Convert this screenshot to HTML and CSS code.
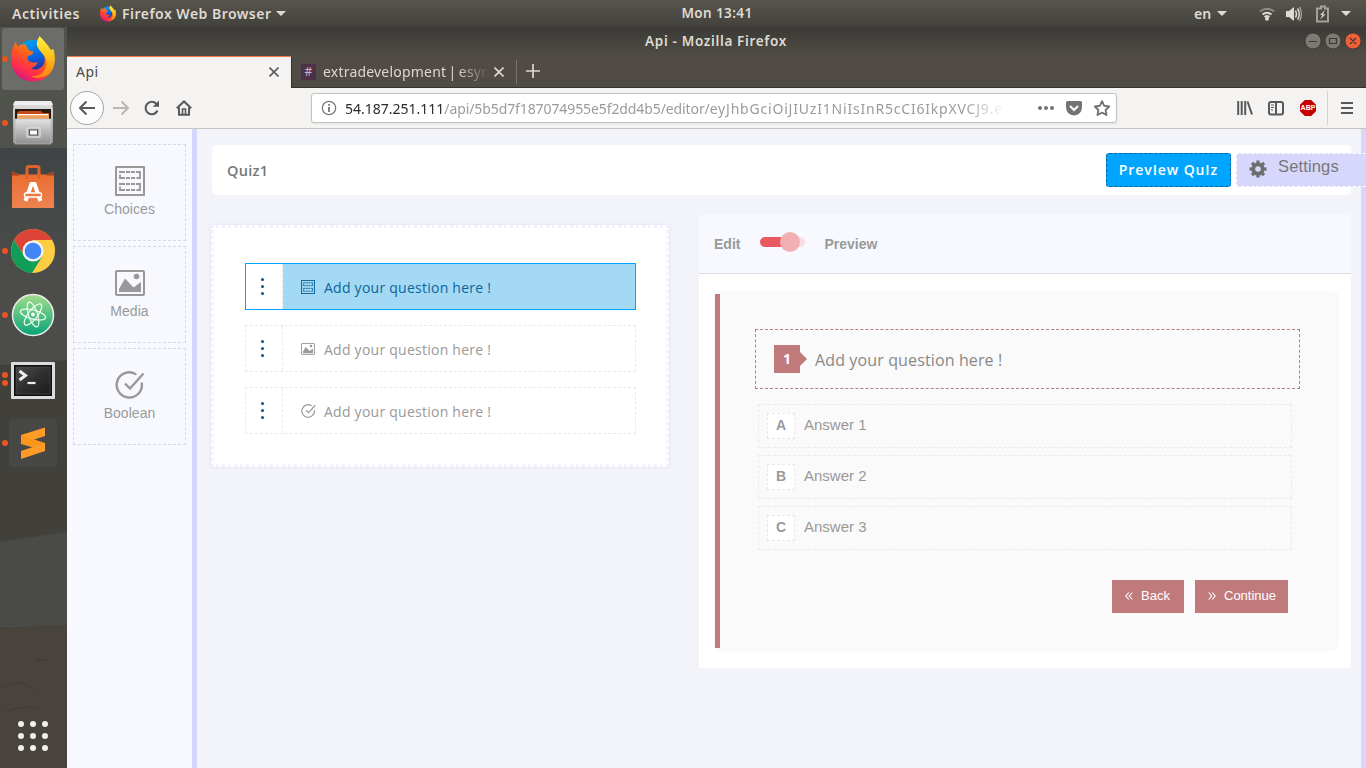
FILE: index.html
```
<!DOCTYPE html>
<html lang="en">
<head>
<meta charset="utf-8">
<title>Api</title>
<link rel="stylesheet" href="styles.css">
</head>
<body>
<svg class="defs" aria-hidden="true">
  <defs>
    <linearGradient id="fxRed" x1="0.8" y1="0" x2="0.2" y2="1"><stop offset="0" stop-color="#ffb000"/><stop offset=".45" stop-color="#ff5b1f"/><stop offset=".75" stop-color="#ff2a50"/><stop offset="1" stop-color="#c8148c"/></linearGradient>
    <linearGradient id="fxBlue" x1="0.3" y1="0" x2="0.6" y2="1"><stop offset="0" stop-color="#00a5f5"/><stop offset=".5" stop-color="#0a63e0"/><stop offset="1" stop-color="#321a8c"/></linearGradient>
    <linearGradient id="fxYel" x1="0.4" y1="0" x2="0.5" y2="1"><stop offset="0" stop-color="#fff04a"/><stop offset=".5" stop-color="#ffc416"/><stop offset="1" stop-color="#ff8214"/></linearGradient>
    <linearGradient id="cab" x1="0" y1="0" x2="0" y2="1"><stop offset="0" stop-color="#e2e2e2"/><stop offset="1" stop-color="#8f8f8f"/></linearGradient>
    <linearGradient id="bag" x1="0" y1="0" x2="0" y2="1"><stop offset="0" stop-color="#ea6c2c"/><stop offset="1" stop-color="#ee8352"/></linearGradient>
    <linearGradient id="atom" x1="0" y1="0" x2="0" y2="1"><stop offset="0" stop-color="#a2dc8c"/><stop offset="1" stop-color="#06a478"/></linearGradient>
    <linearGradient id="term" x1="0" y1="0" x2="1" y2="1"><stop offset="0" stop-color="#4a4a4a"/><stop offset=".5" stop-color="#303030"/><stop offset="1" stop-color="#1c1c1c"/></linearGradient>
    <linearGradient id="sky" x1="0" y1="0" x2="0" y2="1"><stop offset="0" stop-color="#3f4446"/><stop offset="1" stop-color="#4c4d4a"/></linearGradient>
    <symbol id="firefox" viewBox="0 0 44 46">
      <circle cx="22" cy="22" r="18" fill="url(#fxBlue)"/>
      <path d="M5 5.500C5.500 9 6 10 7.500 10.500C9 9 11 8 15 8.500C15.500 11 17 14 19.500 15L22 15.500C22.300 18 21 19 17 20C15.500 24 18 26 22 26.500C24 27.500 25 25.500 26.500 27C25 30 23 31 20 32.500C25 35 30 33 33 28C35 22 33 17 29 13C32 6 37 9 42 19C44 27 43 31 40.500 35C36 42 30 45.500 22 45.500C9 45.500 0 36 0 23C0 16 2 10 5 5.500Z" fill="url(#fxRed)"/>
      <path d="M28.500 0C32.500 4 37 9 40 14L42.500 13C45 22 44.500 31 38.500 38C33 42 25 43 20 40C30 41 36 35 35.500 25C34.500 18 24 13 26 6C26.500 3 28 1.500 28.500 0Z" fill="url(#fxYel)"/>
    </symbol>
    <symbol id="choices" viewBox="0 0 30 30" fill="none" stroke="currentColor">
      <rect x="1" y="1" width="28" height="28" stroke-width="2"/>
      <path d="M4 6H10M11 6h4M16 6h4M21 6H25V12H21.500M5 8.500V12H10M11 12h4M16 12h4M4 18H10M11 18h4M16 18h4M21 18H25V24H21.500M5 20.500V24H10M11 24h4M16 24h4" stroke-width="1.800"/>
    </symbol>
    <symbol id="media" viewBox="0 0 30 26">
      <rect x="1" y="1" width="28" height="24" rx="1" fill="none" stroke="currentColor" stroke-width="2"/>
      <circle cx="21.500" cy="6.500" r="2.800" fill="currentColor"/>
      <path d="M4 22V19L10 8.500L18.500 17.500L26 12V22Z" fill="currentColor"/>
    </symbol>
    <symbol id="boolean" viewBox="0 0 30 28" fill="none" stroke="currentColor" stroke-width="2.400">
      <path d="M20.500 3A12.600 12.600 0 1 0 26.800 12.500" stroke-linecap="round"/>
      <path d="M10 12.500l5 5L28.500 2.500"/>
    </symbol>
  </defs>
</svg>
<div class="screen">
  <header class="topbar">
    <span class="activities">Activities</span>
    <svg class="fx-small"><use href="#firefox"/></svg>
    <span class="appname">Firefox Web Browser</span>
    <i class="caret"></i>
    <span class="clock">Mon 13:41</span>
    <span class="lang">en</span>
    <i class="caret caret-lang"></i>
    <svg class="tray" width="84" height="18" viewBox="0 0 84 18">
      <g fill="none" stroke="#dedbd5" stroke-width="1.800"><path d="M1 6.500Q8 1 15 6.500" stroke="#8f8c86"/><path d="M3.500 9.500Q8 6 12.500 9.500"/><path d="M5.500 12Q8 10 10.500 12"/></g>
      <circle cx="8" cy="13.700" r="2" fill="#dedbd5"/>
      <path d="M27 6h3l5-4v14l-5-4h-3z" fill="#dedbd5"/>
      <path d="M36.500 5.500q2 3.500 0 7M38.500 3.500q3.500 5.500 0 11" fill="none" stroke="#dedbd5" stroke-width="1.500"/><path d="M40.500 2q4 7 0 14" fill="none" stroke="#aaa7a1" stroke-width="1.300"/>
      <path d="M60 3.500h2V1.500h4v2h3V16.500H58V3.500z" fill="none" stroke="#a4a19b" stroke-width="2"/>
      <path d="M66 5l-5 5h2.500L61 14.500l5.500-5H64z" fill="#dedbd5"/>
    </svg>
    <i class="caret caret-end"></i>
  </header>
  <div class="desktop">
    <nav class="dock">
      <svg class="sand" width="67" height="741" viewBox="0 27 67 741" preserveAspectRatio="none">
        <rect y="27" width="67" height="741" fill="#4c4d4a"/>
        <rect y="27" width="67" height="121" fill="#50524c"/>
        <path d="M0 148h67v130H0z" fill="url(#sky)"/>
        <path d="M0 365L67 360V532L0 542Z" fill="#42403b"/>
        <path d="M0 542L67 532V625H0Z" fill="#4a4a46"/>
        <path d="M0 627Q25 628 40 625H67V768H0Z" fill="#48433c"/>
        <path d="M2 688Q22 676 34 690M5 712q20-8 33-3M36 660h12" stroke="#3f3b35" fill="none"/>
      </svg>
      <div class="app app-active"><i class="run"></i><svg width="44" height="46"><use href="#firefox"/></svg></div>
      <div class="app"><i class="run"></i>
        <svg width="44" height="46" viewBox="0 0 44 46"><path d="M3 2h38l1 8v33H2V10z" fill="url(#cab)"/><path d="M2 5L4 1h36l2 4z" fill="#eee"/><path d="M4 9h36v11H4z" fill="#26190f"/><path d="M8 11h22l2 2h6v7H6v-7z" fill="#c44b17"/><path d="M6 14h32v5H6z" fill="#f0a25c"/><path d="M7 14h30v1.200H7z" fill="#fff"/><path d="M4 19h36v25H4z" fill="url(#cab)" stroke="#bbb" stroke-width=".7"/><rect x="16" y="28" width="13" height="9" rx="1" fill="#a8a8a8" stroke="#d9d9d9" stroke-width="1.500"/><rect x="18.500" y="30" width="8" height="5" fill="#fff" stroke="#555"/></svg></div>
      <div class="app">
        <svg width="44" height="46" viewBox="0 0 44 46"><path d="M16 15V4Q16 2.500 18 2.500H26Q28 2.500 28 4V15" fill="none" stroke="#e0622c" stroke-width="3"/><path d="M1 7.500l7 3h28l7-3v36.500H1z" fill="url(#bag)"/><path d="M1 7.500l8 4H1zM43 7.500l-8 4h8z" fill="#a9431d"/><path d="M16 15V9M28 15V9" stroke="#e0622c" stroke-width="3"/><path d="M14.500 37l6-17h3l6 17" fill="none" stroke="#fff" stroke-width="4"/><rect x="13.500" y="29" width="17" height="4" rx="1.500" fill="#ec7840" stroke="#fff" stroke-width="1.500"/></svg></div>
      <div class="app"><i class="run"></i>
        <svg width="44" height="46" viewBox="0 0 44 46"><circle cx="22" cy="23" r="22" fill="#ffcd41"/><path d="M3 12A22 22 0 0 1 41 12H22L14 29z" fill="#db4437"/><path d="M3 12A22 22 0 0 0 21 45L31 29L13.500 28Z" fill="#0f9d58"/><path d="M22 12H41Q44 17 44 23L31 28z" fill="#ffcd41"/><circle cx="22" cy="23" r="10.500" fill="#f4f4f4"/><circle cx="22" cy="23" r="8.300" fill="#4285f4"/></svg></div>
      <div class="app"><i class="run"></i>
        <svg width="44" height="46" viewBox="0 0 44 46"><circle cx="22" cy="23" r="20.500" fill="url(#atom)" stroke="#ededed" stroke-width="1.500"/><g fill="none" stroke="#f2fff0" stroke-width="1.200"><ellipse cx="22" cy="22.500" rx="13" ry="4.500" transform="rotate(15 22 22.500)"/><ellipse cx="22" cy="22.500" rx="13" ry="4.500" transform="rotate(72 22 22.500)"/><ellipse cx="22" cy="22.500" rx="13" ry="4.500" transform="rotate(-52 22 22.500)"/></g><circle cx="22" cy="22.500" r="1.900" fill="#fff"/></svg></div>
      <div class="app"><i class="run run-up"></i><i class="run run-down"></i>
        <svg width="46" height="46" viewBox="0 0 46 46"><rect x="1" y="6" width="44" height="37" rx="1" fill="#dcdcdc"/><rect x="4" y="9" width="38" height="31" fill="#111"/><rect x="6" y="11" width="34" height="27" fill="url(#term)" stroke="#555" stroke-width=".6"/><path d="M9.500 15l6 4.500-6 4.500" fill="none" stroke="#eee" stroke-width="3"/><path d="M17.500 27h8" stroke="#eee" stroke-width="2.200"/></svg></div>
      <div class="app"><i class="run"></i>
        <svg width="48" height="48" viewBox="0 0 48 48"><rect width="48" height="48" rx="3" fill="#474746"/><path d="M12 16L36 8.500V17L12 25z" fill="#ff9b27"/><path d="M12 16L36 24V32L12 25z" fill="#fb961c"/><path d="M12 32L36 24V32L12 40z" fill="#ff9b27"/></svg></div>
      <svg class="grid-icon" width="32" height="32" viewBox="0 0 32 32" fill="#f0f0ee"><circle cx="4" cy="4" r="3"/><circle cx="16" cy="4" r="3"/><circle cx="28" cy="4" r="3"/><circle cx="4" cy="16" r="3"/><circle cx="16" cy="16" r="3"/><circle cx="28" cy="16" r="3"/><circle cx="4" cy="28" r="3"/><circle cx="16" cy="28" r="3"/><circle cx="28" cy="28" r="3"/></svg>
    </nav>
    <section class="window">
      <div class="titlebar">
        <span class="wintitle">Api - Mozilla Firefox</span>
        <svg class="winbtns" width="58" height="18" viewBox="0 0 58 18"><g stroke="#35332f" stroke-width=".8"><circle cx="9" cy="9" r="8" fill="#7c7a74"/><circle cx="29" cy="9" r="8" fill="#7c7a74"/><circle cx="49" cy="9" r="8" fill="#ee6038"/></g><path d="M5 9.500h8M25.500 6.500h7v5h-7zM46 6l6 6m0-6l-6 6" fill="none" stroke="#3a3833" stroke-width="1.200"/></svg>
      </div>
      <div class="tabs">
        <div class="tab tab-on"><span class="tabtext">Api</span><svg class="x" viewBox="0 0 10 10"><path d="M.5.500l9 9m0-9l-9 9"/></svg></div>
        <div class="tab tab-off"><span class="slack">#</span><span class="tabtext tabfade">extradevelopment | esyn</span><svg class="x" viewBox="0 0 10 10"><path d="M.5.500l9 9m0-9l-9 9"/></svg></div>
        <svg class="plus" viewBox="0 0 14 14"><path d="M7 0v14M0 7h14"/></svg>
      </div>
      <div class="toolbar">
        <span class="back"><svg width="18" height="16" viewBox="0 0 18 16"><path d="M17 8H2M8.500 1.500L2 8l6.500 6.500"/></svg></span>
        <svg class="tool fwd" width="18" height="16" viewBox="0 0 18 16"><path d="M1 8h15M9.500 1.500L16 8l-6.500 6.500"/></svg>
        <svg class="tool reload" width="16" height="16" viewBox="0 0 16 16"><path d="M13.500 10.500A6.200 6.200 0 1 1 12.500 4"/><path d="M15 .5V6.800H8.800z" fill="#595959" stroke="none"/></svg>
        <svg class="tool home" width="16" height="16" viewBox="0 0 16 16"><path d="M.8 8.300L8 1.500l7.200 6.800M3 7.500V14.800h10V7.500"/><path d="M6.500 14.500V9h3v5.500" stroke-width="1.600"/></svg>
        <div class="urlbar">
          <svg width="16" height="16" viewBox="0 0 16 16"><circle cx="8" cy="8" r="6.700" fill="none" stroke="#777" stroke-width="1.200"/><path d="M8 7v5M8 4v1.700" stroke="#777" stroke-width="1.800"/></svg>
          <span class="url"><b>54.187.251.111</b><span class="path">/api/5b5d7f187074955e5f2dd4b5/editor/</span><span class="token">eyJhbGciOiJIUzI1NiIsInR5cCI6IkpXVCJ9.e</span></span>
          <svg class="urlicons" width="78" height="18" viewBox="0 0 78 18"><g fill="#737373"><circle cx="4" cy="9" r="2"/><circle cx="10" cy="9" r="2"/><circle cx="16" cy="9" r="2"/><path d="M31.500 2H44.500Q46 2 46 3.500V8Q45.500 16 38 16.500Q30.500 16 30 8V3.500Q30 2 31.500 2z"/></g><path d="M34 7l4 4 4-4" fill="none" stroke="#fff" stroke-width="2"/><path d="M66 2.200l2.200 4.600 5 .7-3.600 3.500.9 5L66 13.600l-4.500 2.400.9-5-3.600-3.500 5-.7z" fill="none" stroke="#737373" stroke-width="1.900" stroke-linejoin="round"/></svg>
        </div>
        <svg class="tool lib" width="16" height="16" viewBox="0 0 16 16"><path d="M1.200 1v14M4.700 1v14M8.200 1v14M10.500 1.500l4.500 13"/></svg>
        <svg class="tool side" width="16" height="16" viewBox="0 0 16 16"><rect x="1" y="2" width="14" height="12.500" rx="2"/><path d="M8 2v12"/><path d="M3 5h3M3 7.500h3M3 10h2" stroke-width="1"/></svg>
        <span class="abp">ABP</span>
        <i class="sep"></i>
        <svg class="menu" width="12" height="12" viewBox="0 0 12 12"><path d="M0 1h12M0 6h12M0 11h12"/></svg>
      </div>
      <div class="page">
        <aside class="sidebar">
          <div class="kind"><svg width="30" height="30"><use href="#choices"/></svg><span>Choices</span></div>
          <div class="kind"><svg width="30" height="26" class="mid"><use href="#media"/></svg><span>Media</span></div>
          <div class="kind"><svg width="30" height="28" class="low"><use href="#boolean"/></svg><span>Boolean</span></div>
        </aside>
        <main class="main">
          <div class="quizbar">
            <h1>Quiz1</h1>
            <button class="preview">PrevIew QuIz</button>
            <div class="settings"><svg width="18" height="18" viewBox="0 0 18 18"><g fill="#6d6d6d"><path d="M7.400.500h3.200v17H7.400z"/><path d="M7.400.500h3.200v17H7.400z" transform="rotate(45 9 9)"/><path d="M7.400.500h3.200v17H7.400z" transform="rotate(90 9 9)"/><path d="M7.400.500h3.200v17H7.400z" transform="rotate(135 9 9)"/><circle cx="9" cy="9" r="6.600"/></g><circle cx="9" cy="9" r="2.800" fill="#d7d6fb"/></svg><span>Settings</span></div>
          </div>
          <div class="columns">
            <div class="questions">
              <div class="q q-on"><span class="grip"><i></i><i></i><i></i></span><span class="qbody"><svg width="14" height="14"><use href="#choices"/></svg><span>Add your question here !</span></span></div>
              <div class="q"><span class="grip"><i></i><i></i><i></i></span><span class="qbody"><svg width="14" height="12"><use href="#media"/></svg><span>Add your question here !</span></span></div>
              <div class="q"><span class="grip"><i></i><i></i><i></i></span><span class="qbody"><svg width="15" height="14" class="wide"><use href="#boolean"/></svg><span>Add your question here !</span></span></div>
            </div>
            <div class="editor">
              <div class="modes"><span>Edit</span><span class="switch"><i></i></span><span>Preview</span></div>
              <div class="quiz">
                <div class="ask"><span class="num">1</span><span>Add your question here !</span></div>
                <div class="ans"><b>A</b><span>Answer 1</span></div>
                <div class="ans"><b>B</b><span>Answer 2</span></div>
                <div class="ans"><b>C</b><span>Answer 3</span></div>
                <div class="btns">
                  <button class="btn btn-back"><svg width="8" height="8" viewBox="0 0 8 8"><path d="M3.800.500L.8 4l3 3.500M7.300.500L4.300 4l3 3.500"/></svg>Back</button>
                  <button class="btn btn-next"><svg width="8" height="8" viewBox="0 0 8 8"><path d="M.7.500l3 3.500-3 3.500M4.200.500l3 3.500-3 3.500"/></svg>Continue</button>
                </div>
              </div>
            </div>
          </div>
        </main>
      </div>
    </section>
  </div>
</div>
</body>
</html>
```
FILE: styles.css
```
* { box-sizing: border-box; }
body { margin: 0; overflow: hidden; font-family: "Liberation Sans", Arial, sans-serif; }
svg { display: block; flex: none; }
i { flex: none; }
.defs { position: absolute; width: 0; height: 0; }
.screen { width: 1366px; height: 768px; display: flex; flex-direction: column; overflow: hidden; }

/* desktop panel */
.topbar { position: relative; flex: none; height: 27px; display: flex; align-items: center; background: linear-gradient(#58554d, #42413c); color: #dfdbd2; font: 600 14px/27px "Noto Sans", sans-serif; white-space: nowrap; }
.activities { width: 88px; padding-left: 12px; letter-spacing: .55px; }
.fx-small { width: 16px; height: 17px; margin-left: 12px; }
.appname { width: 149px; margin-left: 6px; letter-spacing: .48px; }
.caret { width: 0; height: 0; border: 5px solid transparent; border-top-color: #dfdbd2; border-bottom: 0; margin-left: 5px; }
.clock { position: absolute; left: 617px; width: 200px; text-align: center; font-size: 13.500px; letter-spacing: .4px; }
.lang { margin-left: 908px; width: 18px; }
.tray { margin-left: 32px; }
.caret-end { margin-left: -2px; }

.desktop { flex: 1; display: flex; min-height: 0; }
.dock { position: relative; width: 67px; padding-right: 1px; display: flex; flex-direction: column; align-items: center; background: #4a4b48; }
.sand { position: absolute; left: 0; top: 0; }
.app { position: relative; width: 62px; height: 62px; margin-bottom: 2px; display: flex; align-items: center; justify-content: center; }
.app-active { background: #6c6d69; border-radius: 3px; margin-top: 1px; }
.run { position: absolute; left: 0; top: 28px; width: 6px; height: 6px; border-radius: 50%; background: #e95420; }
.run-up { top: 24px; }
.run-down { top: 32px; }
.grid-icon { position: relative; margin-top: auto; margin-bottom: 16px; }

/* browser chrome */
.window { flex: 1; min-width: 0; display: flex; flex-direction: column; background: #504c45; font-family: "Noto Sans", sans-serif; }
.titlebar { position: relative; height: 29px; flex: none; background: linear-gradient(#3b3a36, #504c45); }
.wintitle { display: block; width: 1298px; text-align: center; font: 600 13.500px/28px "Noto Sans", sans-serif; letter-spacing: .66px; color: #dfdbd2; }
.winbtns { position: absolute; left: 1237px; top: 5px; }
.tabs { height: 32px; flex: none; display: flex; align-items: flex-end; border-bottom: 1px solid #34332f; }
.tab { display: flex; align-items: center; height: 31px; font-size: 14px; }
.tab-on { width: 225px; height: 33px; margin-bottom: -1px; background: #f4f3f1; border-top: 2px solid #f07746; border-right: 1px solid #34332f; padding: 0 12px 2px 9px; justify-content: space-between; color: #4b4b4b; letter-spacing: .5px; }
.x { width: 10px; height: 10px; stroke: #5a5a5a; stroke-width: 1.600; fill: none; }
.tab-off { width: 225px; padding: 0 12px 0 9px; border-right: 1px solid #777269; height: 24px; margin-bottom: 3px; color: #dcd8cf; }
.tab-off .x { stroke: #dcd8cf; margin-left: 4px; }
.slack { width: 16px; height: 16px; background: #4b3048; color: #c9b3c5; font: 12px/16px "Noto Sans", sans-serif; text-align: center; margin-right: 6px; }
.tabfade { width: 168px; flex: none; overflow: hidden; white-space: nowrap; line-height: 23px; letter-spacing: .2px; word-spacing: -1.500px; padding: 0 0 1px 1px; -webkit-mask-image: linear-gradient(90deg, #000 80%, transparent); mask-image: linear-gradient(90deg, #000 80%, transparent); }
.plus { width: 14px; height: 14px; margin: 0 0 9px 9px; stroke: #dcd8cf; stroke-width: 1.700; }
.toolbar { height: 41px; flex: none; display: flex; align-items: center; background: #f4f3f1; border-bottom: 1px solid #c6c4c0; }
.back { width: 34px; height: 34px; margin-left: 3px; border: 1px solid #a5a4a2; border-radius: 50%; background: #fcfcfc; display: flex; align-items: center; justify-content: center; }
.back svg, .tool, .menu { fill: none; stroke: #595959; stroke-width: 2; }
.tool.fwd { margin-left: 8px; stroke: #b8b7b5; }
.reload { margin-left: 14px; }
.home { margin-left: 16px; }
.urlbar { width: 806px; height: 30px; margin-left: 119px; padding: 0 0 0 9px; border: 1px solid #c3c1be; border-radius: 3px; background: #fff; display: flex; align-items: center; box-shadow: 0 1px 2px #0001; }
.url { width: 660px; flex: none; margin: 0 31px 0 8px; padding-top: 1px; overflow: hidden; white-space: nowrap; font-size: 14px; color: #9b9b9b; -webkit-mask-image: linear-gradient(90deg, #000 94%, transparent); mask-image: linear-gradient(90deg, #000 94%, transparent); }
.url b { font-weight: 400; color: #2b2b2b; }
.path { letter-spacing: -.1px; }
.token { letter-spacing: .8px; }
.lib { margin-left: 120px; }
.side { margin-left: 15px; }
.abp { width: 16px; height: 16px; margin-left: 16px; background: #c60000; color: #fff; font: 700 7px/16px "Liberation Sans", sans-serif; text-align: center; clip-path: polygon(30% 0, 70% 0, 100% 30%, 100% 70%, 70% 100%, 30% 100%, 0 70%, 0 30%); }
.sep { width: 1px; height: 34px; margin-left: 11px; background: #d5d3d0; }
.menu { margin-left: 13px; }

/* quiz editor */
.page { flex: 1; min-height: 0; display: flex; background: #f3f4f9; font-family: "Liberation Sans", Arial, sans-serif; color: #999; }
.sidebar { width: 130px; flex: none; padding: 15px 6px; background: #f8f9ff; border-right: 5px solid #d5d6fb; display: flex; flex-direction: column; gap: 5px; }
.kind { width: 113px; height: 97px; border: 1px dashed #d9dade; display: flex; flex-direction: column; align-items: center; padding-top: 21px; font-size: 14px; line-height: 17px; }
.kind span { margin-top: 5px; letter-spacing: .05px; }
.kind .mid { margin: 2px 0; }
.kind .low { margin: 1px 0; }
.main { flex: 1; min-width: 0; padding: 16px 10px 0 15px; border-right: 5px solid #d7d7f9; }
.quizbar { height: 50px; display: flex; background: #fff; border-radius: 5px; padding: 8px 0 0 15px; }
.quizbar h1 { flex: 1; margin: 0; font: 600 14.500px/35px "Open Sans", sans-serif; color: #777; letter-spacing: .3px; }
.preview { width: 125px; height: 34px; padding: 0; border: 1px dashed #066398; border-radius: 3px; background: #00a5ff; color: #fff; font: 600 14px/30px "Open Sans", sans-serif; letter-spacing: .9px; }
.settings { position: relative; flex: none; width: 135px; height: 34px; margin: 0 -20px 0 5px; border: 1px dashed #fff; background: #d7d6fb; display: flex; padding: 6px 0 0 12px; color: #777; font-size: 16.500px; line-height: 16px; }
.settings svg { margin-right: 11px; }
.settings span { margin-top: -2px; letter-spacing: .15px; }
.columns { display: flex; align-items: flex-start; }
.questions { width: 458px; height: 242px; margin: 30px 30px 0 -1px; padding: 35px 30px 0 31px; border: 3px dotted #f3f1fd; background: #fff; box-shadow: 0 0 3px #dcdcfa; display: flex; flex-direction: column; gap: 15px; }
.q { width: 391px; height: 47px; display: flex; border: 1px dashed #e9e9e9; font: 14px/46px "Open Sans", sans-serif; letter-spacing: .25px; white-space: nowrap; }
.grip { width: 37px; border-right: 1px dashed #e9e9e9; display: flex; flex-direction: column; gap: 4px; align-items: center; padding: 14px 3px 0 0; background: #fff; }
.grip i { width: 3px; height: 3px; border-radius: 50%; background: #06577f; }
.qbody { flex: 1; display: flex; align-items: center; padding-left: 18px; }
.qbody svg { margin: 0 9px 0 0; }
.qbody .wide { margin-right: 8px; }
.qbody span { padding-top: 2px; line-height: 43px; }
.q-on { border: 1px solid #00a5ff; color: #0b659a; }
.q-on .qbody { background: #a4d9f6; }
.editor { width: 652px; height: 453px; margin-top: 20px; background: #fff; }
.modes { height: 59px; display: flex; align-items: center; padding-left: 15px; background: #f8f9ff; border-bottom: 1px solid #dadbe2; font-size: 14px; font-weight: 700; }
.switch { position: relative; width: 45px; height: 10px; margin: -4px 19px 0 20px; border-radius: 5px; background: linear-gradient(90deg, #e85a61 65%, #fadde3 65%); }
.switch i { position: absolute; left: 20px; top: -5px; width: 20px; height: 20px; border-radius: 50%; background: #f3b0b4; }
.quiz { position: relative; width: 622px; height: 356px; margin: 19px 0 0 16px; padding: 36px 0 0 40px; background: #fafafa; border-radius: 0 5px 5px 0; box-shadow: 0 0 4px #eee; }
.quiz::before { content: ""; position: absolute; left: 0; top: 1px; width: 5px; height: 354px; background: #c17a7b; }
.ask { width: 545px; height: 60px; margin-bottom: 15px; border: 1px dashed #c17a7b; display: flex; align-items: center; padding-left: 18px; font: 16px/28px "Open Sans", sans-serif; letter-spacing: .13px; color: #888; white-space: nowrap; }
.ask > span:last-child { padding-top: 2px; }
.num { position: relative; width: 26px; height: 28px; margin-right: 15px; background: #c17a7b; color: #fff; font: 700 14px/28px "Open Sans", sans-serif; text-align: center; }
.num::after { content: ""; position: absolute; left: 26px; top: 7px; border: 7px solid transparent; border-left-color: #c17a7b; border-right: 0; }
.ans { width: 534px; height: 44px; margin: 0 0 7px 3px; border: 1px dashed #eaeaea; display: flex; align-items: center; padding: 0 0 2px 8px; font-size: 15px; }
.ans b { width: 28px; height: 26px; margin: 2px 9px 0 0; border: 1px dashed #e8e8e8; background: #fff; text-align: center; line-height: 23px; font-size: 14px; }
.ans span { margin-top: -2px; }
.btns { display: flex; justify-content: flex-end; gap: 11px; width: 533px; padding-top: 23px; }
.btn { height: 33px; border: 0; padding: 0 0 2px 13px; background: #c17a7b; color: #fff; font: 13px "Liberation Sans", Arial, sans-serif; display: flex; align-items: center; }
.btn svg { margin-right: 8px; fill: none; stroke: #fff; stroke-width: 1.100; }
.btn-back { width: 72px; }
.btn-next { width: 93px; }
```
